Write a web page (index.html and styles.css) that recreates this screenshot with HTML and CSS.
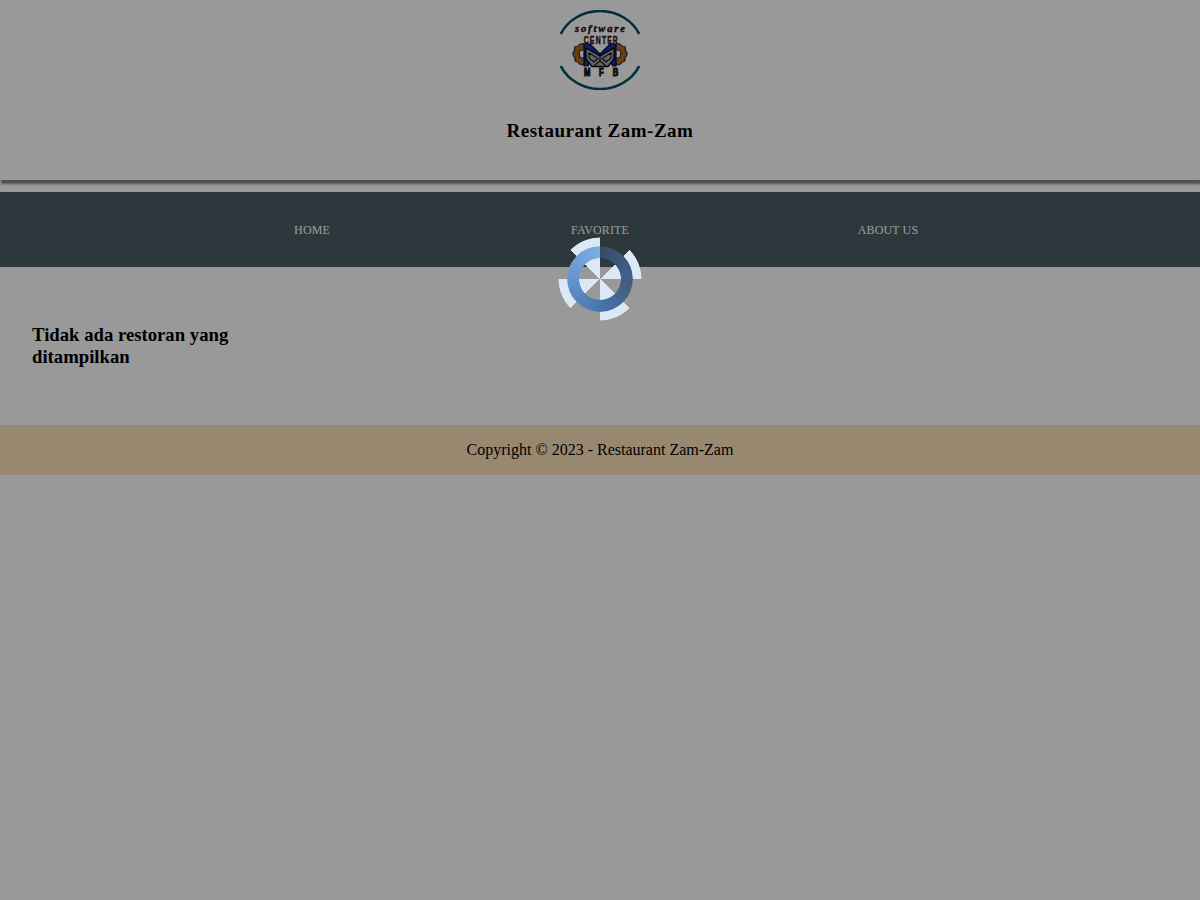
FILE: index.html
```html
<!DOCTYPE html>
<html lang="id">
<head>
<meta charset="utf-8">
<title>Restaurant Zam-Zam</title>
<link rel="stylesheet" href="styles.css">
</head>
<body>
<header class="header">
  <svg class="logo" viewBox="0 0 80 80" role="img" aria-label="Software Center">
    <g fill="none" stroke="#004b63" stroke-width="2.5">
      <path d="M.8 24A43 39 0 0 1 79.200 24"/>
      <path d="M.8 56A43 39 0 0 0 79.200 56"/>
    </g>
    <text class="logo-script" x="15" y="21.500" textLength="50">software</text>
    <g transform="translate(23.700 33.800) scale(.6 1)"><text class="logo-center" x="0 10.300 20 30.300 39.300 48.500" y="0">CENTER</text></g>
    <g fill="#b86a15" stroke="#26343a" stroke-width="1.200">
      <path d="M25 35Q21 32 18 36Q13 36 15 40Q11 44 15 48Q14 52 18 52Q20 57 26 53V48Q18 49 19.500 44Q18 39 25 40Z"/>
      <path d="M55 35Q59 32 62 36Q67 36 65 40Q69 44 65 48Q66 52 62 52Q60 57 54 53V48Q62 49 60.500 44Q62 39 55 40Z"/>
    </g>
    <path d="M24 34H30L40 44L50 34H56V56H52.500L50 50L40 53L30 50L28 56H24Z" fill="#0838b8" stroke="#050a24" stroke-width="1.200"/>
    <path d="M26 38L40 46L54 38V49L48 56.500H32L26 49Z" fill="#a8a8a8" stroke="#08080c" stroke-width="1.400"/>
    <path d="M40 46V51L34 56M40 51L46 56M29 43L38 48.500L34 52L29 48ZM51 43L42 48.500L46 52L51 48Z" fill="none" stroke="#151515" stroke-width="1.100"/>
    <g class="logo-letters" transform="scale(.7 1)"><text x="34.300 55.600 75.500" y="66.500">MFB</text></g>
  </svg>
  <h1 class="title">Restaurant Zam-Zam</h1>
</header>
<nav class="nav"><a class="nav-link">HOME</a><a class="nav-link">FAVORITE</a><a class="nav-link">ABOUT US</a></nav>
<main class="content"><h2 class="empty">Tidak ada restoran yang ditampilkan</h2></main>
<footer class="footer">Copyright © 2023 - Restaurant Zam-Zam</footer>
<div class="overlay">
  <div class="spinner"><div class="ring"></div></div>
</div>
</body>
</html>
```
FILE: styles.css
```css
body { margin: 0; background: #fff; color: #000; font-family: "Liberation Serif", "Times New Roman", serif; }
.header { height: 180px; box-sizing: border-box; padding-top: 10px; display: flex; flex-direction: column; align-items: center; box-shadow: 1px 4px 2px #888; }
.logo { width: 80px; height: 80px; }
.logo-script { font: italic bold 10.5px "Liberation Serif", serif; fill: #26060c; stroke: #26060c; stroke-width: 0.4px; }
.logo-center { font: bold 11.5px "Liberation Sans", sans-serif; fill: #3c1016; stroke: #3c1016; stroke-width: 0.5px; }
.logo-letters { font: bold 11px "Liberation Sans", sans-serif; fill: #8a5212; stroke: #111; stroke-width: 1.1px; }
.title { margin: 30px 0 0; font-size: 19px; line-height: 22px; letter-spacing: 0.5px; }
.nav { margin-top: 12px; height: 75px; padding: 0 168px; display: grid; grid-template-columns: repeat(3, 1fr); align-items: center; justify-items: center; background: #4b5e66; }
.nav-link { padding-top: 1px; font-size: 12px; line-height: 15px; letter-spacing: 0.12px; color: #fff; }
.content { height: 158px; box-sizing: border-box; padding: 57px 32px 0; }
.empty { margin: 0; width: 230px; font-size: 18.72px; line-height: 22px; }
.footer { height: 50px; line-height: 50px; text-align: center; font-size: 16px; background: #fde3bb; }
.overlay { position: fixed; inset: 0; background: rgba(0, 0, 0, 0.4); }
.spinner { position: absolute; left: 558px; top: 237px; width: 84px; height: 84px; display: grid; place-items: center; }
.spinner::before { content: ""; grid-area: 1 / 1; width: 84px; height: 84px; background: repeating-conic-gradient(transparent 0 45deg, #dce8f5 45deg 90deg); mask: radial-gradient(circle, #000 41px, transparent 41.8px); }
.ring { grid-area: 1 / 1; width: 66px; height: 66px; border-radius: 50%; background: conic-gradient(#364a61, #41618f 85deg, #445b7c 95deg, #4975aa 180deg, #6494cb 270deg, #7bb0e5); mask: radial-gradient(circle, transparent 20.500px, #000 21.200px); }
```
